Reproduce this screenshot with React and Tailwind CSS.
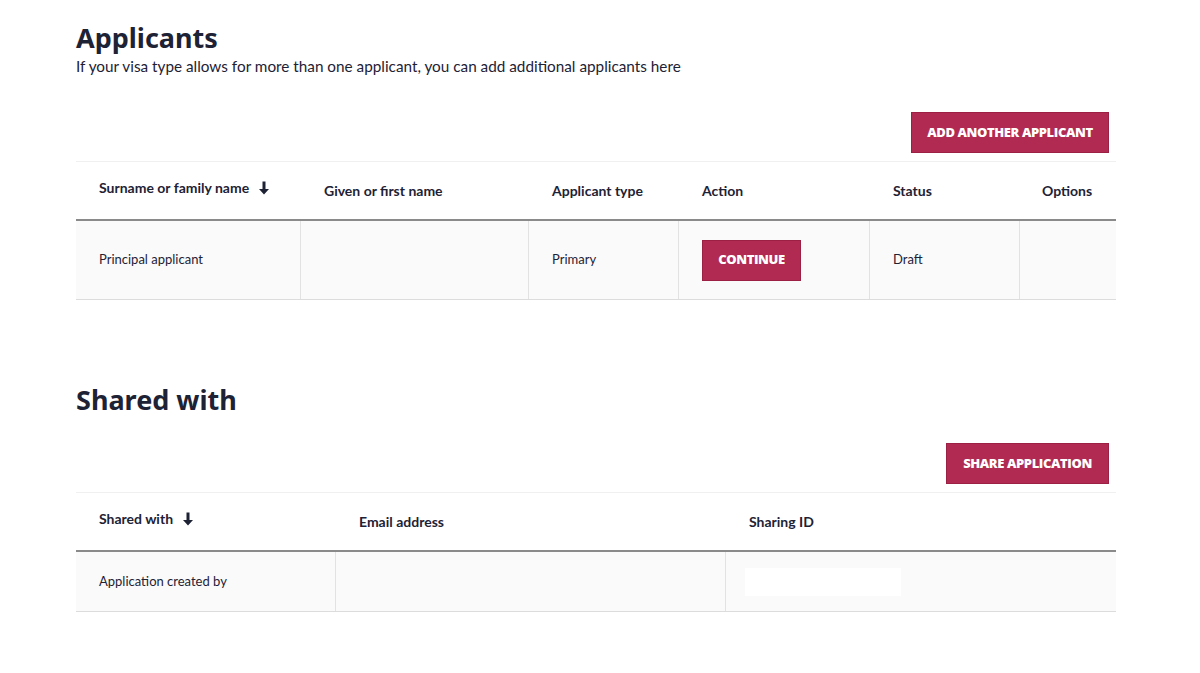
import React from "react";

const Arrow = () => (
  <svg width="12" height="14" viewBox="0 0 12 14" className="inline-block ml-[9px] -mt-[3px]">
    <path d="M4.5 0.5h3v7.5h3.5L6 13.5 1 8h3.5z" fill="#1e2235" />
  </svg>
);

const Btn = ({ children, className = "" }) => (
  <button
    className={
      "bg-[#b02a52] border border-[#9c1f44] text-white font-extrabold uppercase text-[13px] tracking-[-0.4px] " +
      className
    }
    style={{ fontFamily: "'Open Sans', sans-serif" }}
  >
    {children}
  </button>
);

export default function App() {
  const body = { fontFamily: "Lato, 'Noto Sans', sans-serif" };
  const head = { fontFamily: "'Noto Sans', 'Open Sans', sans-serif" };
  return (
    <div className="min-h-[673px] bg-white text-[#1e2235]" style={body}>
      <div className="w-[1040px] ml-[76px] pt-[21px]">
        <h1 className="text-[27px] leading-[34px] font-bold text-[#1e2235]" style={head}>
          Applicants
        </h1>
        <p className="text-[15.3px] leading-[20px] mt-[1px] text-[#1e2235]">
          If your visa type allows for more than one applicant, you can add additional applicants here
        </p>
        <div className="flex justify-end mt-[36px] pr-[7px]">
          <Btn className="w-[198px] h-[41px]">Add another applicant</Btn>
        </div>
        <div className="mt-[8px] border-t border-[#f0f0f0]">
          <div className="grid grid-cols-[225px_228px_150px_191px_150px_96px] h-[59px] border-b-2 border-[#8a8a8a] text-[14px] font-bold">
            <div className="pl-[23px] pt-[15px]">Surname or family name<Arrow /></div>
            <div className="pl-[23px] pt-[18px]">Given or first name</div>
            <div className="pl-[23px] pt-[18px]">Applicant type</div>
            <div className="pl-[23px] pt-[18px]">Action</div>
            <div className="pl-[23px] pt-[18px]">Status</div>
            <div className="pl-[22px] pt-[18px]">Options</div>
          </div>
          <div className="grid grid-cols-[225px_228px_150px_191px_150px_96px] h-[79px] bg-[#fafafa] border-b border-[#dcdcdc] text-[13px]">
            <div className="pl-[23px] flex items-center border-r border-[#e2e2e2]">Principal applicant</div>
            <div className="border-r border-[#e2e2e2]"></div>
            <div className="pl-[23px] flex items-center border-r border-[#e2e2e2]">Primary</div>
            <div className="pl-[23px] flex items-center border-r border-[#e2e2e2]">
              <Btn className="w-[99px] h-[41px]">Continue</Btn>
            </div>
            <div className="pl-[23px] flex items-center border-r border-[#e2e2e2]">Draft</div>
            <div></div>
          </div>
        </div>

        <h2 className="mt-[83px] text-[27px] leading-[34px] font-bold text-[#1e2235]" style={head}>
          Shared with
        </h2>
        <div className="flex justify-end mt-[26px] pr-[7px]">
          <Btn className="w-[163px] h-[41px]">Share application</Btn>
        </div>
        <div className="mt-[8px] border-t border-[#f0f0f0]">
          <div className="grid grid-cols-[260px_390px_390px] h-[59px] border-b-2 border-[#8a8a8a] text-[14px] font-bold">
            <div className="pl-[23px] pt-[15px]">Shared with<Arrow /></div>
            <div className="pl-[23px] pt-[18px]">Email address</div>
            <div className="pl-[23px] pt-[18px]">Sharing ID</div>
          </div>
          <div className="grid grid-cols-[260px_390px_390px] h-[60px] bg-[#fafafa] border-b border-[#dcdcdc] text-[13px]">
            <div className="pl-[23px] flex items-center border-r border-[#e2e2e2]">Application created by</div>
            <div className="border-r border-[#e2e2e2]"></div>
            <div className="pl-[19px] flex items-center">
              <div className="w-[156px] h-[28px] bg-white"></div>
            </div>
          </div>
        </div>
      </div>
    </div>
  );
}
